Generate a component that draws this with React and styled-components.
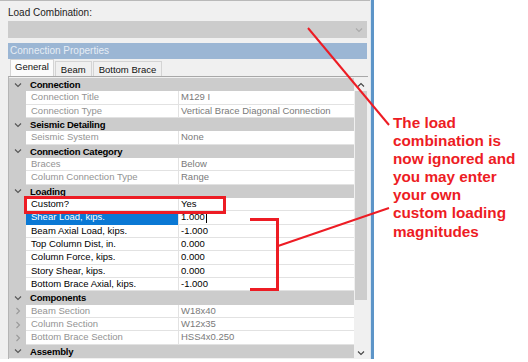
import React from "react";
import styled, { createGlobalStyle } from "styled-components";

const RED = "#ed1c24";

const GlobalStyle = createGlobalStyle`
  html, body {
    margin: 0;
    padding: 0;
    background: #ffffff;
  }
  body {
    font-family: "Liberation Sans", Arial, sans-serif;
  }
`;

const rows = [
  { type: "cat", label: "Connection" },
  { label: "Connection Title", value: "M129 I" },
  { label: "Connection Type", value: "Vertical Brace Diagonal Connection" },
  { type: "cat", label: "Seismic Detailing" },
  { label: "Seismic System", value: "None" },
  { type: "cat", label: "Connection Category" },
  { label: "Braces", value: "Below" },
  { label: "Column Connection Type", value: "Range" },
  { type: "cat", label: "Loading" },
  { label: "Custom?", value: "Yes", active: true },
  { label: "Shear Load, kips.", value: "1.000", active: true, selected: true },
  { label: "Beam Axial Load, kips.", value: "-1.000", active: true },
  { label: "Top Column Dist, in.", value: "0.000", active: true },
  { label: "Column Force, kips.", value: "0.000", active: true },
  { label: "Story Shear, kips.", value: "0.000", active: true },
  { label: "Bottom Brace Axial, kips.", value: "-1.000", active: true },
  { type: "cat", label: "Components" },
  { label: "Beam Section", value: "W18x40", expand: true },
  { label: "Column Section", value: "W12x35", expand: true },
  { label: "Bottom Brace Section", value: "HSS4x0.250", expand: true },
  { type: "cat", label: "Assembly" },
];

const Chevron = ({ dir = "down", color = "#555" }) => (
  <svg width="8" height="8" viewBox="0 0 8 8">
    {dir === "down" ? (
      <polyline points="1,2.5 4,5.5 7,2.5" fill="none" stroke={color} strokeWidth="1.1" />
    ) : dir === "up" ? (
      <polyline points="1,5.5 4,2.5 7,5.5" fill="none" stroke={color} strokeWidth="1.1" />
    ) : (
      <polyline points="2.5,1 5.5,4 2.5,7" fill="none" stroke={color} strokeWidth="1.1" />
    )}
  </svg>
);

const App = () => {
  return (
    <>
      <GlobalStyle />
      <Page>
        <Panel>
          <Label>Load Combination:</Label>
          <Combo>
            <Chevron color="#aaa" />
          </Combo>
          <Header>Connection Properties</Header>
          <Tabs>
            <Tab $active>General</Tab>
            <Tab>Beam</Tab>
            <Tab>Bottom Brace</Tab>
          </Tabs>
          <Grid>
            <Rows>
              {rows.map((r, i) =>
                r.type === "cat" ? (
                  <CatRow key={i}>
                    <Gutter>
                      <Chevron />
                    </Gutter>
                    <CatLabel>{r.label}</CatLabel>
                  </CatRow>
                ) : (
                  <PropRow key={i}>
                    <Gutter>{r.expand && <Chevron dir="right" color="#999" />}</Gutter>
                    <NameCell $active={r.active} $selected={r.selected}>
                      {r.label}
                    </NameCell>
                    <ValueCell $active={r.active}>
                      {r.value}
                      {r.selected && <Caret />}
                    </ValueCell>
                  </PropRow>
                )
              )}
            </Rows>
            <Scrollbar>
              <ScrollBtn>
                <Chevron dir="up" color="#444" />
              </ScrollBtn>
              <Thumb />
              <ScrollBtn $bottom>
                <Chevron color="#444" />
              </ScrollBtn>
            </Scrollbar>
          </Grid>
        </Panel>
        <Edge />
        <Notes>
          The load
          <br />
          combination is
          <br />
          now ignored and
          <br />
          you may enter
          <br />
          your own
          <br />
          custom loading
          <br />
          magnitudes
        </Notes>
        <Overlay width="528" height="362" viewBox="0 0 528 362">
          <line x1="308" y1="28" x2="389" y2="125" stroke={RED} strokeWidth="2" />
          <rect x="25.5" y="197.5" width="199" height="15" fill="none" stroke={RED} strokeWidth="3" />
          <polyline points="250,219.5 277.5,219.5 277.5,289.5 250,289.5" fill="none" stroke={RED} strokeWidth="3" />
          <line x1="278" y1="246" x2="389" y2="208" stroke={RED} strokeWidth="2" />
        </Overlay>
      </Page>
    </>
  );
};

const Page = styled.div`
  position: relative;
  display: flex;
  width: 528px;
  height: 362px;
  overflow: hidden;
`;
const Panel = styled.div`
  width: 370px;
  height: 359px;
  display: flex;
  flex-direction: column;
  background: #f0f0f0;
  border-top: 1px solid #b9b9b9;
  box-sizing: border-box;
  font-size: 9.5px;
`;
const Label = styled.div`
  height: 20px;
  line-height: 23px;
  padding-left: 8px;
  color: #222;
  font-size: 10px;
`;
const Combo = styled.div`
  height: 17px;
  margin: 0 3px 0 8px;
  background: #cccccc;
  display: flex;
  align-items: center;
  justify-content: flex-end;
  padding-right: 4px;
`;
const Header = styled.div`
  height: 16px;
  margin: 5px 3px 0 8px;
  background: #9bb6d4;
  color: #e6edf5;
  line-height: 16px;
  padding-left: 2px;
  font-size: 10px;
`;
const Tabs = styled.div`
  height: 17px;
  display: flex;
  align-items: flex-end;
  padding-left: 10px;
`;
const Tab = styled.div`
  height: ${(p) => (p.$active ? "16px" : "14px")};
  padding: 0 ${(p) => (p.$active ? "4px" : "5px")};
  margin-right: 1px;
  border: 1px solid #d4d4d4;
  border-bottom: none;
  background: ${(p) => (p.$active ? "#fbfbfb" : "#f0f0f0")};
  color: #111;
  line-height: ${(p) => (p.$active ? "14px" : "15px")};
  font-size: 9.5px;
`;
const Grid = styled.div`
  flex: 1;
  display: flex;
  margin: 0 2px 0 8px;
  border-top: 1px solid #a8a8a8;
  border-left: 1px solid #b5b5b5;
  overflow: hidden;
  padding-top: 1px;
`;
const Rows = styled.div`
  width: 345px;
  display: flex;
  flex-direction: column;
`;
const CatRow = styled.div`
  height: 13.33px;
  flex: none;
  display: flex;
  background: #cccccc;
`;
const Gutter = styled.div`
  width: 17px;
  flex: none;
  background: #cccccc;
  display: flex;
  align-items: center;
  justify-content: center;
`;
const CatLabel = styled.div`
  padding-left: 4px;
  font-weight: bold;
  color: #000;
  line-height: 13px;
  letter-spacing: -0.2px;
`;
const PropRow = styled.div`
  height: 13.33px;
  flex: none;
  display: grid;
  grid-template-columns: 17px 152px 1fr;
`;
const NameCell = styled.div`
  background: ${(p) => (p.$selected ? "#0a78d4" : "#ffffff")};
  color: ${(p) => (p.$selected ? "#ffffff" : p.$active ? "#000" : "#939393")};
  border-bottom: 1px solid ${(p) => (p.$selected ? "#0a78d4" : "#e2e2e2")};
  padding-left: 5px;
  line-height: 12.5px;
  white-space: nowrap;
  box-sizing: border-box;
`;
const ValueCell = styled.div`
  background: #ffffff;
  color: ${(p) => (p.$active ? "#000" : "#7a7a7a")};
  border-bottom: 1px solid #e2e2e2;
  border-left: 1px solid #e2e2e2;
  padding-left: 2px;
  line-height: 12.5px;
  white-space: nowrap;
  display: flex;
  align-items: center;
  box-sizing: border-box;
`;
const Caret = styled.span`
  width: 1px;
  height: 10px;
  background: #000;
  margin-left: 1px;
`;
const Scrollbar = styled.div`
  width: 14px;
  flex: none;
  display: flex;
  flex-direction: column;
  background: #f0f0f0;
`;
const ScrollBtn = styled.div`
  height: 13px;
  display: flex;
  align-items: center;
  justify-content: center;
  margin-top: ${(p) => (p.$bottom ? "auto" : "0")};
`;
const Thumb = styled.div`
  height: 209px;
  margin: 0 1px;
  background: #cdcdcd;
`;
const Edge = styled.div`
  width: 3px;
  height: 359px;
  background: #5d95c8;
  border-left: 1px solid #dbe6f0;
`;
const Notes = styled.div`
  padding: 114px 0 0 19px;
  color: ${RED};
  font-weight: bold;
  font-size: 15.3px;
  line-height: 18.1px;
  white-space: nowrap;
`;
const Overlay = styled.svg`
  position: absolute;
  left: 0;
  top: 0;
  pointer-events: none;
`;

export default App;
